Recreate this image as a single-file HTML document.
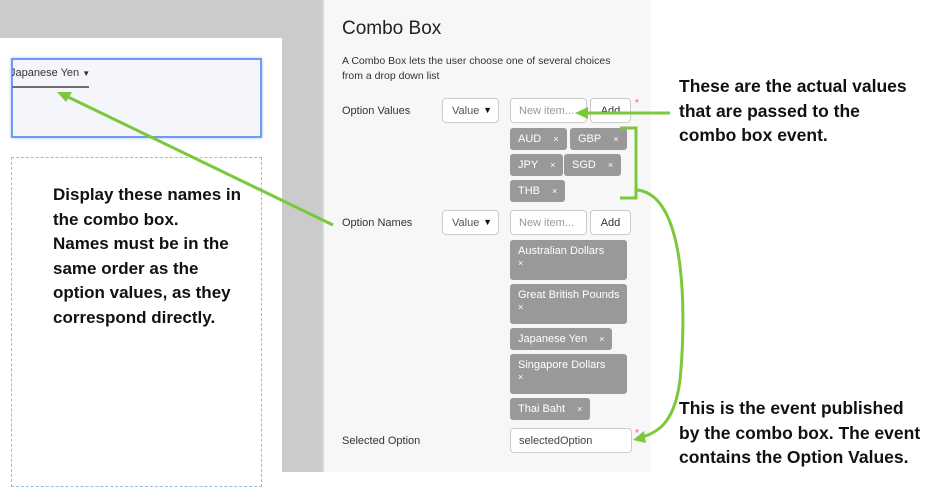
<!DOCTYPE html>
<html><head><meta charset="utf-8"><style>
*{margin:0;padding:0;box-sizing:border-box}
body{width:933px;height:472px;position:relative;overflow:hidden;background:#fff;font-family:"Liberation Sans",sans-serif;color:#222}
.a{position:absolute}
.lbl{font-size:11px;color:#333}
.sel{position:absolute;width:57px;height:25px;border:1px solid #ccc;border-radius:4px;background:#fff;font-size:11px;color:#555;padding:6px 0 0 9px}
.sel:after{content:"▼";position:absolute;right:6px;top:6px;font-size:9px;color:#111}
.inp{position:absolute;height:25px;border:1px solid #ccc;border-radius:4px;background:#fff;font-size:11px;color:#999;padding:6px 0 0 8px}
.btn{position:absolute;width:41px;height:25px;border:1px solid #ccc;border-radius:4px;background:#fff;font-size:11px;color:#333;text-align:center;padding-top:6px}
.tag{position:absolute;background:#999;border-radius:3px;color:#fff;font-size:11px;padding:5px 8px;line-height:12px;white-space:nowrap}
.tag i{font-style:normal;font-size:9px;margin-left:12px}
.big{position:absolute;font-size:16.5px;font-weight:bold;line-height:24.5px;color:#111;white-space:nowrap}
</style></head><body>
<div class="a" style="left:0;top:0;width:322px;height:472px;background:#cbcbcb"></div>
<div class="a" style="left:0;top:38px;width:282px;height:434px;background:#fff"></div>
<div class="a" style="left:11px;top:58px;width:251px;height:80px;background:#f5f6fc;border:2px solid #6f9cf0;box-shadow:0 0 3px #a9c3f7"></div>
<div class="a" style="left:12px;top:67px;width:80px;font-size:11px;color:#333;overflow:hidden;white-space:nowrap;text-indent:-2px">Japanese Yen <span style="font-size:8px">▼</span></div>
<div class="a" style="left:12px;top:86px;width:77px;height:2px;background:#707070"></div>
<div class="a" style="left:11px;top:157px;width:251px;height:330px;border:1px dashed #9db7ee"></div>
<div class="big" style="left:53px;top:183px;font-size:17px">Display these names in<br>the combo box.<br>Names must be in the<br>same order as the<br>option values, as they<br>correspond directly.</div>

<div class="a" style="left:322px;top:0;width:329px;height:472px;background:#f7f7f7;border-left:2px solid #d8d8d8"></div>
<div class="a" style="left:342px;top:18px;font-size:19px;color:#222">Combo Box</div>
<div class="a lbl" style="left:342px;top:54px;line-height:15px;font-size:10.5px">A Combo Box lets the user choose one of several choices<br>from a drop down list</div>

<div class="a lbl" style="left:342px;top:105px">Option Values</div>
<div class="sel" style="left:442px;top:98px">Value</div>
<div class="inp" style="left:510px;top:98px;width:77px">New item...</div>
<div class="btn" style="left:590px;top:98px">Add</div>
<div class="a" style="left:635px;top:98px;color:#e55;font-size:10px">*</div>
<div class="tag" style="left:510px;top:128px">AUD<i>×</i></div>
<div class="tag" style="left:570px;top:128px">GBP<i>×</i></div>
<div class="tag" style="left:510px;top:154px">JPY<i>×</i></div>
<div class="tag" style="left:564px;top:154px">SGD<i>×</i></div>
<div class="tag" style="left:510px;top:180px">THB<i>×</i></div>

<div class="a lbl" style="left:342px;top:217px">Option Names</div>
<div class="sel" style="left:442px;top:210px">Value</div>
<div class="inp" style="left:510px;top:210px;width:77px">New item...</div>
<div class="btn" style="left:590px;top:210px">Add</div>
<div class="tag" style="left:510px;top:240px;width:117px;height:40px">Australian Dollars<br><i style="margin:0">×</i></div>
<div class="tag" style="left:510px;top:284px;width:117px;height:40px">Great British Pounds<br><i style="margin:0">×</i></div>
<div class="tag" style="left:510px;top:328px">Japanese Yen<i>×</i></div>
<div class="tag" style="left:510px;top:354px;width:117px;height:40px">Singapore Dollars<br><i style="margin:0">×</i></div>
<div class="tag" style="left:510px;top:398px">Thai Baht<i>×</i></div>

<div class="a lbl" style="left:342px;top:435px">Selected Option</div>
<div class="inp" style="left:510px;top:428px;width:122px;color:#444">selectedOption</div>
<div class="a" style="left:635px;top:428px;color:#e55;font-size:10px">*</div>

<div class="big" style="left:679px;top:74px;font-size:17.5px">These are the actual values<br>that are passed to the<br>combo box event.</div>
<div class="big" style="left:679px;top:396px;font-size:17.5px">This is the event published<br>by the combo box. The event<br>contains the Option Values.</div>

<svg class="a" style="left:0;top:0" width="933" height="472">
<g stroke="#7cc83c" stroke-width="3" fill="none">
<line x1="333" y1="225" x2="66" y2="96"/>
<line x1="670" y1="113" x2="585" y2="113"/>
<polyline points="620,128 636,128 636,198 620,198"/>
<path d="M637,190 C690,195 685,330 680,380 C675,420 660,432 642,437"/>
</g>
<g fill="#7cc83c">
<polygon points="57,92 72,92 66,102"/>
<polygon points="575,113 588,107 588,119"/>
<polygon points="633,440 644,431 646,443"/>
</g>
</svg>
</body></html>
